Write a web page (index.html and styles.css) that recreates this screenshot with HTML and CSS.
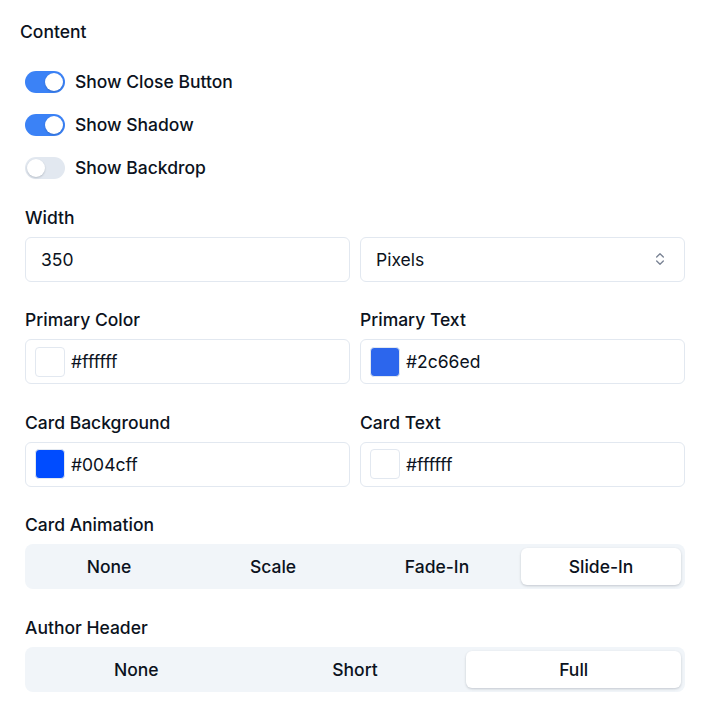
FILE: index.html
```html
<!DOCTYPE html>
<html>
<head>
<meta charset="utf-8">
<link rel="stylesheet" href="styles.css">
</head>
<body>
<div class="panel">
  <div class="heading">Content</div>
  <div class="section">
    <div class="toggles">
      <div class="toggle-row"><span class="switch on"><span class="knob"></span></span><span class="toggle-label">Show Close Button</span></div>
      <div class="toggle-row"><span class="switch on"><span class="knob"></span></span><span class="toggle-label">Show Shadow</span></div>
      <div class="toggle-row"><span class="switch"><span class="knob"></span></span><span class="toggle-label">Show Backdrop</span></div>
    </div>

    <div class="field">
      <div class="label">Width</div>
      <div class="grid2">
        <div class="input">350</div>
        <div class="input select">Pixels
          <svg class="chev" viewBox="0 0 24 24" width="16" height="16" fill="none" stroke="currentColor" stroke-width="2" stroke-linecap="round" stroke-linejoin="round"><path d="m7 15 5 5 5-5"/><path d="m7 9 5-5 5 5"/></svg>
        </div>
      </div>
    </div>

    <div class="grid2">
      <div class="field">
        <div class="label">Primary Color</div>
        <div class="input color"><span class="swatch" style="background:#ffffff"></span>#ffffff</div>
      </div>
      <div class="field">
        <div class="label">Primary Text</div>
        <div class="input color"><span class="swatch" style="background:#2c66ed"></span>#2c66ed</div>
      </div>
    </div>

    <div class="grid2">
      <div class="field">
        <div class="label">Card Background</div>
        <div class="input color"><span class="swatch" style="background:#004cff"></span>#004cff</div>
      </div>
      <div class="field">
        <div class="label">Card Text</div>
        <div class="input color"><span class="swatch" style="background:#ffffff"></span>#ffffff</div>
      </div>
    </div>

    <div class="field">
      <div class="label">Card Animation</div>
      <div class="segmented four">
        <div class="seg">None</div>
        <div class="seg">Scale</div>
        <div class="seg">Fade-In</div>
        <div class="seg active">Slide-In</div>
      </div>
    </div>

    <div class="field">
      <div class="label">Author Header</div>
      <div class="segmented three">
        <div class="seg">None</div>
        <div class="seg">Short</div>
        <div class="seg active">Full</div>
      </div>
    </div>
  </div>
</div>
</body>
</html>
```

FILE: styles.css
```css
* { box-sizing: border-box; }
body {
  margin: 0;
  background: #ffffff;
  font-family: Inter, "Noto Sans", sans-serif;
  color: #0b1220;
  font-weight: 500;
  font-size: 17.5px;
}
.panel {
  padding: 20px;
}
.heading {
  line-height: 24px;
  font-weight: 500;
}
.section {
  padding: 0 5px;
  display: flex;
  flex-direction: column;
  gap: 25.5px;
  margin-top: 26px;
}
.toggles {
  display: flex;
  flex-direction: column;
  gap: 19px;
  margin-bottom: -1px;
}
.toggle-row {
  display: flex;
  align-items: center;
  height: 24px;
  gap: 10px;
}
.switch {
  width: 40px;
  height: 22px;
  border-radius: 11px;
  background: #e2e8f0;
  display: flex;
  align-items: center;
  padding: 2px;
}
.switch.on {
  background: #3b82f6;
  justify-content: flex-end;
}
.knob {
  width: 18px;
  height: 18px;
  border-radius: 50%;
  background: #ffffff;
  box-shadow: 0 1px 2px rgba(15, 23, 42, 0.2);
}
.toggle-label {
  line-height: 24px;
}
.field {
  display: flex;
  flex-direction: column;
}
.label {
  line-height: 25px;
  margin-bottom: 7px;
}
.grid2 {
  display: grid;
  grid-template-columns: 1fr 1fr;
  gap: 10px;
}
.input {
  height: 45px;
  border: 1px solid #e2e8f0;
  border-radius: 6px;
  display: flex;
  align-items: center;
  padding: 0 15px;
  font-weight: 400;
}
.select {
  justify-content: space-between;
}
.chev {
  color: #7a8394;
  width: 16px;
  height: 16px;
  margin-right: 1px;
}
.input.color {
  padding: 0 9px;
  gap: 6px;
}
.swatch {
  width: 30px;
  height: 30px;
  border-radius: 4px;
  border: 1px solid #e2e8f0;
}
.segmented {
  display: grid;
  gap: 4px;
  padding: 4px;
  background: #f1f5f9;
  border-radius: 8px;
  height: 45px;
}
.segmented.four { grid-template-columns: repeat(4, 1fr); }
.segmented.three { grid-template-columns: repeat(3, 1fr); }
.seg {
  display: flex;
  align-items: center;
  justify-content: center;
  border-radius: 6px;
  font-weight: 500;
}
.seg.active {
  background: #ffffff;
  box-shadow: 0 1px 3px rgba(15, 23, 42, 0.12), 0 1px 2px rgba(15, 23, 42, 0.08);
}
```
